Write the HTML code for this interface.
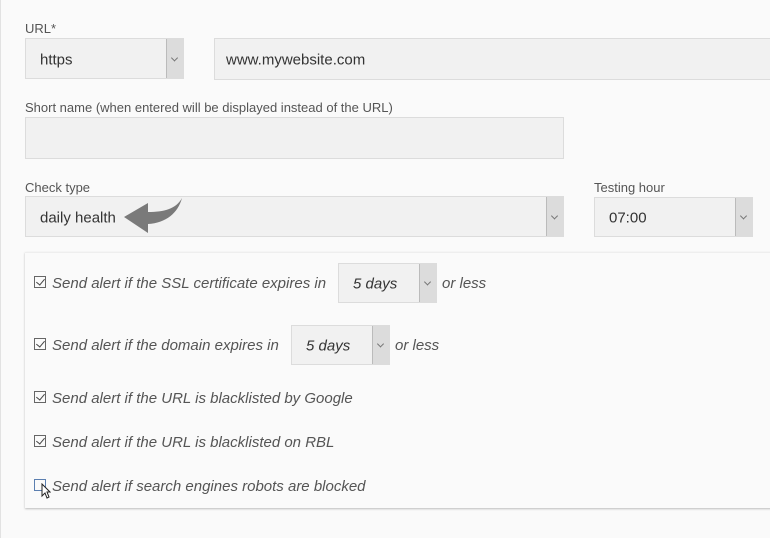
<!DOCTYPE html>
<html><head><style>
body{margin:0;width:770px;height:538px;background:#fafafa;font-family:"Liberation Sans",sans-serif;color:#444;position:relative;overflow:hidden}
.edge{position:absolute;left:0;top:0;width:1px;height:538px;background:#e2e2e2}
.lbl{position:absolute;font-size:13px;color:#555}
.box{position:absolute;background:#f1f1f1;border:1px solid #dcdcdc;box-sizing:border-box;font-size:15px;color:#333}
.box span{position:absolute;left:14px;top:50%;transform:translateY(-45%)}
.arr{position:absolute;right:0;top:0;bottom:0;width:17px;background:#dcdcdc;border-left:1px solid #bbb;box-sizing:border-box}
.arr:after{content:"";position:absolute;left:5px;top:50%;width:4px;height:4px;border-right:1px solid #777;border-bottom:1px solid #777;transform:translateY(-70%) rotate(45deg)}
.panel{position:absolute;left:25px;top:252px;width:760px;height:255px;background:#fafafa;box-shadow:0 1px 2px rgba(0,0,0,.25);border-top:1px solid #eee}
.row{position:absolute;left:34px;font-size:15px;font-style:italic;color:#555;line-height:18px}
.cb{position:absolute;left:34px;width:12px;height:12px;border:1px solid #666;box-sizing:border-box}
.cb.on:after{content:"";position:absolute;left:3px;top:0px;width:4px;height:7px;border-right:1px solid #444;border-bottom:1px solid #444;transform:rotate(40deg)}
.row .t{position:absolute;left:18px;white-space:nowrap}
.box i{font-style:italic}
</style></head><body>
<div class="edge"></div>
<div class="lbl" style="left:25px;top:21px">URL*</div>
<div class="box" style="left:25px;top:38px;width:159px;height:41px"><span>https</span><div class="arr"></div></div>
<div class="box" style="left:214px;top:38px;width:570px;height:42px"><span style="left:11px">www.mywebsite.com</span></div>
<div class="lbl" style="left:25px;top:100px">Short name (when entered will be displayed instead of the URL)</div>
<div class="box" style="left:25px;top:117px;width:539px;height:42px"></div>
<div class="lbl" style="left:25px;top:180px">Check type</div>
<div class="box" style="left:25px;top:196px;width:539px;height:41px"><span>daily health</span><div class="arr"></div></div>
<svg style="position:absolute;left:122px;top:197px" width="62" height="38" viewBox="0 0 62 38"><path d="M60 1 C54 12 42 15 26 15 L26 6 L2 20 L26 36 L26 27 C44 26 56 16 60 1 Z" fill="#7a7a7a"/></svg>
<div class="lbl" style="left:594px;top:180px">Testing hour</div>
<div class="box" style="left:594px;top:197px;width:159px;height:40px"><span>07:00</span><div class="arr"></div></div>
<div class="panel"></div>
<div class="cb on" style="top:276px"></div><div class="row" style="top:275px"><span class="t">Send alert if the SSL certificate expires in</span></div>
<div class="box" style="left:338px;top:263px;width:99px;height:40px"><span><i>5 days</i></span><div class="arr"></div></div>
<div class="row" style="left:442px;top:275px">or less</div>
<div class="cb on" style="top:338px"></div><div class="row" style="top:337px"><span class="t">Send alert if the domain expires in</span></div>
<div class="box" style="left:291px;top:325px;width:99px;height:40px"><span><i>5 days</i></span><div class="arr"></div></div>
<div class="row" style="left:395px;top:337px">or less</div>
<div class="cb on" style="top:391px"></div><div class="row" style="top:390px"><span class="t">Send alert if the URL is blacklisted by Google</span></div>
<div class="cb on" style="top:435px"></div><div class="row" style="top:434px"><span class="t">Send alert if the URL is blacklisted on RBL</span></div>
<div class="cb" style="top:479px;border-color:#5b7fb0"></div><div class="row" style="top:478px"><span class="t">Send alert if search engines robots are blocked</span></div>
<svg style="position:absolute;left:41px;top:483px" width="10" height="16" viewBox="0 0 10 16"><path d="M1 1 L1 13 L4 10 L6 15 L8 14 L6 9 L9 9 Z" fill="#fff" stroke="#222" stroke-width="1"/></svg>
</body></html>
